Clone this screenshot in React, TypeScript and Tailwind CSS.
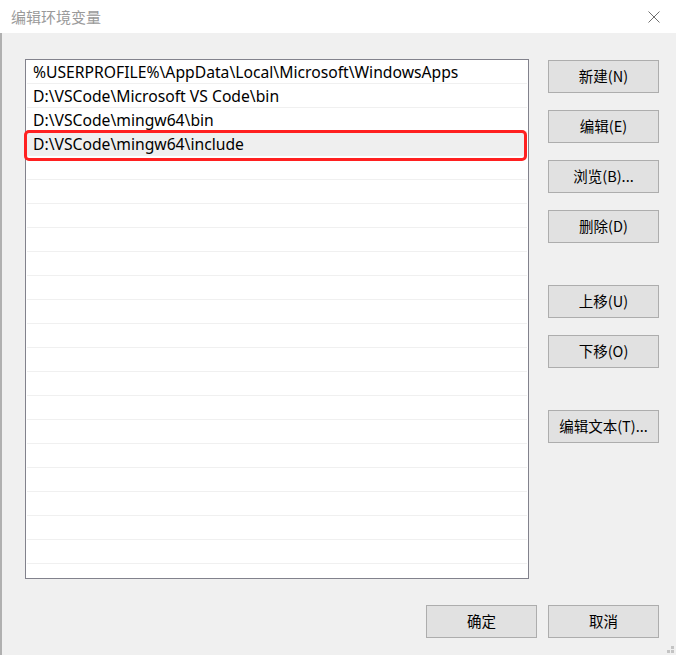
import React from "react";

const paths = [
  "%USERPROFILE%\\AppData\\Local\\Microsoft\\WindowsApps",
  "D:\\VSCode\\Microsoft VS Code\\bin",
  "D:\\VSCode\\mingw64\\bin",
  "D:\\VSCode\\mingw64\\include",
];

const cjk = { fontFamily: '"Noto Sans CJK SC", "Noto Sans", sans-serif' };

const WinButton: React.FC<{ label: string; className?: string }> = ({ label, className = "" }) => (
  <button
    className={`w-[111px] h-[33px] bg-[#e1e1e1] border border-[#adadad] text-[14.5px] text-black flex items-center justify-center leading-none pb-px ${className}`}
    style={cjk}
  >
    {label}
  </button>
);

export default function App() {
  const rows = Array.from({ length: 22 }, (_, i) => paths[i] ?? "");

  return (
    <div className="w-[676px] h-[655px] flex flex-col overflow-hidden bg-white" style={cjk}>
      {/* Title bar */}
      <div className="h-[33px] bg-white flex items-center justify-between pl-[11px] pr-[13px] shrink-0">
        <span className="text-[15px] text-[#9a9a9a] leading-none">编辑环境变量</span>
        <svg width="14" height="14" viewBox="0 0 14 14" className="mr-[2px]">
          <path d="M1.5 1.5 L12.5 12.5 M12.5 1.5 L1.5 12.5" stroke="#6f6f6f" strokeWidth="1" fill="none" />
        </svg>
      </div>

      {/* Body */}
      <div className="relative flex-1 bg-[#f0f0f0] border-l-2 border-[#b0b0b0] pl-[23px] pt-[26px]">
        <div className="flex">
          {/* List */}
          <div className="relative w-[504px] h-[520px] bg-white border border-[#82828c] overflow-hidden">
            {rows.map((p, i) => (
              <div
                key={i}
                className={`h-[24px] mx-px flex items-center pl-[6px] pt-[3px] border-b border-[#f0f0f0] text-[15.7px] text-black whitespace-nowrap leading-none ${
                  i === 3 ? "bg-[#efefef]" : ""
                }`}
                style={{ fontFamily: '"Noto Sans", "Noto Sans CJK SC", sans-serif' }}
              >
                {p}
              </div>
            ))}
          </div>

          {/* Side buttons */}
          <div className="flex flex-col ml-[19px] pt-px">
            <WinButton label="新建(N)" />
            <WinButton label="编辑(E)" className="mt-[17px]" />
            <WinButton label="浏览(B)..." className="mt-[17px]" />
            <WinButton label="删除(D)" className="mt-[17px]" />
            <WinButton label="上移(U)" className="mt-[42px]" />
            <WinButton label="下移(O)" className="mt-[17px]" />
            <WinButton label="编辑文本(T)..." className="mt-[42px]" />
          </div>
        </div>

        {/* Bottom buttons */}
        <div className="flex justify-end gap-[11px] mt-[26px] pr-[17px]">
          <WinButton label="确定" />
          <WinButton label="取消" />
        </div>

        {/* Red highlight annotation */}
        <div className="absolute left-[22px] top-[97px] w-[503px] h-[31px] border-[3px] border-[#ff2020] rounded-[5px] pointer-events-none" />

        {/* Resize grip */}
        <svg className="absolute right-[1px] bottom-[1px]" width="8" height="8" viewBox="0 0 8 8">
          <rect x="4" y="0" width="3" height="3" fill="#c4c4c4" />
          <rect x="0" y="4" width="3" height="3" fill="#c4c4c4" />
          <rect x="4" y="4" width="3" height="3" fill="#c4c4c4" />
        </svg>
      </div>
    </div>
  );
}
